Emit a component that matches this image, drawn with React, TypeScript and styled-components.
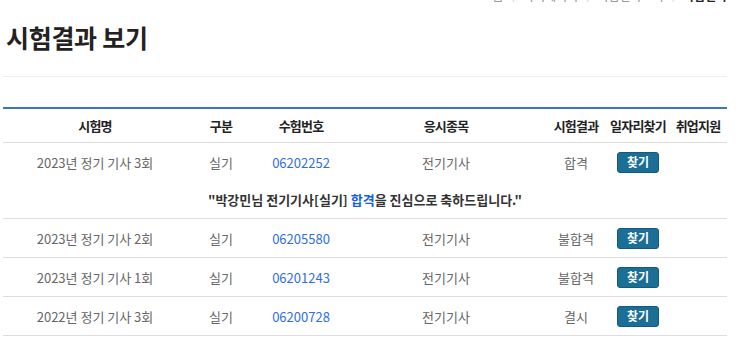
import React from "react";
import styled, { createGlobalStyle } from "styled-components";

const GlobalStyle = createGlobalStyle`
  html, body { margin: 0; padding: 0; background: #fff; }
  body { font-family: "Noto Sans CJK KR", "Noto Sans", sans-serif; }
`;

const Page = styled.div`
  width: 724px;
  padding: 0 12px 0 3px;
`;

const Breadcrumb = styled.div`
  height: 2px;
  overflow: hidden;
  display: flex;
  justify-content: flex-end;
  align-items: flex-end;
  gap: 8px;
  font-size: 12px;
  line-height: 13px;
  color: #888;
  white-space: nowrap;
`;

const Crumb = styled.span<{ $current?: boolean }>`
  color: ${(p) => (p.$current ? "#222" : "#888")};
  font-weight: ${(p) => (p.$current ? 700 : 400)};
`;

const Sep = styled.span`
  color: #ccc;
`;

const Title = styled.h2`
  margin: 17px 0 0;
  padding-left: 3px;
  font-size: 25px;
  line-height: 36px;
  font-weight: 700;
  color: #222;
  letter-spacing: -0.3px;
`;

const Divider = styled.div`
  height: 1px;
  background: #eee;
  margin-top: 21px;
`;

const Table = styled.table`
  width: 724px;
  margin-top: 30px;
  border-collapse: collapse;
  table-layout: fixed;
  border-top: 2px solid #3a78b4;
`;

const Th = styled.th`
  height: 33px;
  padding: 0;
  font-size: 13px;
  font-weight: 700;
  color: #222;
  letter-spacing: -0.8px;
  text-align: center;
  border-bottom: 1px solid #ddd;
  white-space: nowrap;
`;

const Tr = styled.tr<{ $noBorder?: boolean }>`
  border-bottom: ${(p) => (p.$noBorder ? "none" : "1px solid #ddd")};
`;

const Td = styled.td<{ $tone?: "num" | "text" }>`
  height: 38px;
  padding: 0;
  text-align: center;
  font-size: 13px;
  color: ${(p) => (p.$tone === "num" ? "#2e6de9" : "#666")};
  white-space: nowrap;
`;

const MessageCell = styled.td`
  height: 37px;
  padding: 0;
  text-align: center;
  font-size: 13px;
  font-weight: 700;
  color: #333;
`;

const Pass = styled.span`
  color: #1662dc;
`;

const FindButton = styled.button`
  width: 42px;
  height: 21px;
  padding: 0;
  border: 1px solid #125a7e;
  border-radius: 3px;
  background: #1b6f96;
  color: #fff;
  font-family: inherit;
  font-size: 12px;
  font-weight: 700;
  line-height: 18px;
  cursor: pointer;
`;

const widths = [184, 68, 92, 198, 62, 62, 58];
const headers = ["시험명", "구분", "수험번호", "응시종목", "시험결과", "일자리찾기", "취업지원"];

const rows = [
  { name: "2023년 정기 기사 3회", type: "실기", no: "06202252", subject: "전기기사", result: "합격", message: true },
  { name: "2023년 정기 기사 2회", type: "실기", no: "06205580", subject: "전기기사", result: "불합격" },
  { name: "2023년 정기 기사 1회", type: "실기", no: "06201243", subject: "전기기사", result: "불합격" },
  { name: "2022년 정기 기사 3회", type: "실기", no: "06200728", subject: "전기기사", result: "결시" },
];

export default function App() {
  return (
    <>
      <GlobalStyle />
      <Page>
        <Breadcrumb>
          <Crumb>홈</Crumb>
          <Sep>|</Sep>
          <Crumb>마이페이지</Crumb>
          <Sep>|</Sep>
          <Crumb>시험결과조회</Crumb>
          <Sep>|</Sep>
          <Crumb $current>시험결과</Crumb>
        </Breadcrumb>
        <Title>시험결과 보기</Title>
        <Divider />
        <Table>
          <colgroup>
            {widths.map((w, i) => (
              <col key={i} style={{ width: w }} />
            ))}
          </colgroup>
          <thead>
            <tr>
              {headers.map((h) => (
                <Th key={h}>{h}</Th>
              ))}
            </tr>
          </thead>
          <tbody>
            {rows.map((r) => (
              <React.Fragment key={r.no}>
                <Tr $noBorder={r.message}>
                  <Td>{r.name}</Td>
                  <Td>{r.type}</Td>
                  <Td $tone="num">{r.no}</Td>
                  <Td>{r.subject}</Td>
                  <Td>{r.result}</Td>
                  <Td>
                    <FindButton type="button">찾기</FindButton>
                  </Td>
                  <Td />
                </Tr>
                {r.message && (
                  <Tr>
                    <MessageCell colSpan={7}>
                      "박강민님 전기기사[실기] <Pass>합격</Pass>을 진심으로 축하드립니다."
                    </MessageCell>
                  </Tr>
                )}
              </React.Fragment>
            ))}
          </tbody>
        </Table>
      </Page>
    </>
  );
}
